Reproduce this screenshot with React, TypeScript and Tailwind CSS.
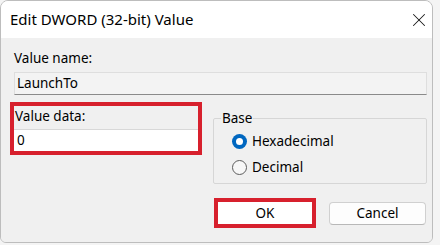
import { X } from "lucide-react"

const font = { fontFamily: '"Segoe UI", "Noto Sans", "Liberation Sans", sans-serif' }

function Radio({ checked, label }: { checked?: boolean; label: string }) {
  return (
    <div className="flex items-center gap-[5px] h-[26px]">
      {checked ? (
        <span className="w-[15px] h-[15px] rounded-full bg-[#0067c0] flex items-center justify-center">
          <span className="w-[7px] h-[7px] rounded-full bg-white" />
        </span>
      ) : (
        <span className="w-[15px] h-[15px] rounded-full border border-[#5c5c5c] bg-[#f7f7f7]" />
      )}
      <span className="text-[13.5px] text-black">{label}</span>
    </div>
  )
}

export default function App() {
  return (
    <div className="w-[440px] h-[245px] bg-[#f4f4f4] overflow-hidden" style={font}>
      <div className="w-[433px] h-[243px] flex flex-col border border-[#bdbdbd] rounded-t-[8px] rounded-b-[6px] overflow-hidden">
        {/* Title bar */}
        <div className="h-[37px] bg-white flex items-center justify-between pl-[9px] pr-[2px] shrink-0">
          <span className="text-[15px] text-black">Edit DWORD (32-bit) Value</span>
          <X className="w-[22px] h-[22px] text-[#1a1a1a]" strokeWidth={1.1} />
        </div>

        {/* Body */}
        <div className="flex-1 bg-[#f0f0f0] pl-[13px] pr-[5px] pt-[11px]">
          <div className="text-[13.5px] leading-[18px] text-black">Value name:</div>
          <div className="mt-[5px] h-[23px] bg-[#f3f3f3] border border-[#dedede] border-b-[#8a8a8a] flex items-center pl-[2px] text-[13.5px] text-black">
            LaunchTo
          </div>

          <div className="mt-[7px] flex items-start">
            {/* Value data */}
            <div className="-ml-[4px] w-[192px] h-[53px] border-4 border-[#d7202d] flex flex-col">
              <div className="pl-[1px] text-[13.5px] leading-[18px] text-black mt-[1px]">Value data:</div>
              <div className="mt-auto h-[22px] bg-white border-t border-[#d8d8d8] flex items-center pl-[3px] text-[13.5px] text-black">
                0
              </div>
            </div>

            {/* Base group */}
            <fieldset className="ml-[11px] flex-1 h-[74px] mt-[8px] border border-[#d6d6d6] rounded-[2px] pl-[18px] pr-2 pb-1">
              <legend className="ml-[-11px] px-[1px] text-[13.5px] leading-[16px] text-black">Base</legend>
              <div className="mt-[2px]">
                <Radio checked label="Hexadecimal" />
                <Radio label="Decimal" />
              </div>
            </fieldset>
          </div>

          {/* Buttons */}
          <div className="mt-[14px] flex justify-end items-start gap-[13px] pr-[1px]">
            <div className="border-4 border-[#d7202d]">
              <button className="w-[94px] h-[22px] bg-white text-[13.5px] text-black flex items-center justify-center">
                OK
              </button>
            </div>
            <button className="mt-[4px] w-[97px] h-[23px] bg-[#fdfdfd] border border-[#d0d0d0] border-b-[#b8b8b8] rounded-[4px] text-[13.5px] text-black flex items-center justify-center">
              Cancel
            </button>
          </div>
        </div>
      </div>
    </div>
  )
}
